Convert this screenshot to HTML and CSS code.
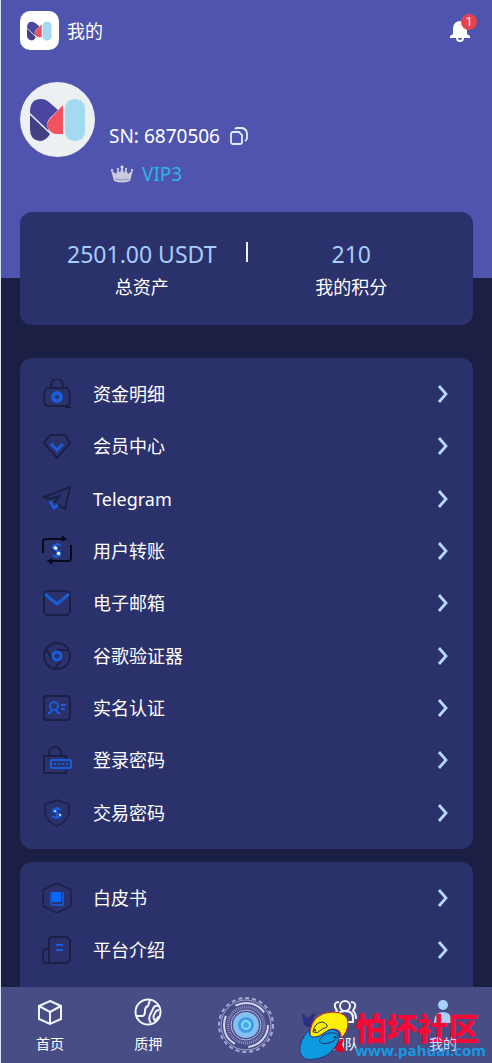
FILE: index.html
```html
<!DOCTYPE html>
<html lang="zh-CN">
<head>
    <meta charset="UTF-8">
    <meta name="viewport" content="width=device-width, initial-scale=1.0">
    <title>我的</title>
    <link rel="stylesheet" href="styles.css">
</head>
<body>
    <!-- Shared shapes -->
    <svg class="defs" aria-hidden="true">
        <symbol id="logo" viewBox="0 0 56 44">
            <path d="M0 17 20 36q-4 7-10 7Q0 42 0 31Z" fill="#423f83"/>
            <path d="M0 14Q0 1 11 1q5 0 9 4l8 7-8 8q-5 5-1 13L0 15Z" fill="#4b469f"/>
            <path d="M33 7v29h-6q-6 0-9-6-2-6 3-10Z" fill="#f0525f"/>
            <rect x="35" y="1" width="20" height="42" rx="9" fill="#a3daf2"/>
        </symbol>
        <symbol id="arrow" viewBox="0 0 10 18">
            <path d="m1 1 7 8-7 8" fill="none" stroke="#b7d8ff" stroke-width="2.8"/>
        </symbol>
    </svg>

    <div class="app">
        <main class="content">
            <header class="header">
                <div class="topbar">
                    <span class="brand"><svg width="25" height="20"><use href="#logo"/></svg></span>
                    <h1>我的</h1>
                    <button class="bell" aria-label="消息">
                        <svg width="20" height="22" viewBox="0 0 20 22">
                            <path d="M10 1a7 7 0 0 0-7 7v6l-3 2v2h20v-2l-3-2V8a7 7 0 0 0-7-7Z" fill="#fff"/>
                            <path d="M7 18a3 3 0 0 0 6 0" fill="none" stroke="#fff" stroke-width="2"/>
                        </svg>
                        <span class="badge">1</span>
                    </button>
                </div>
                <div class="profile">
                    <span class="avatar"><svg width="56" height="44"><use href="#logo"/></svg></span>
                    <div class="profile-info">
                        <div class="sn">
                            <span>SN: 6870506</span>
                            <button aria-label="复制">
                                <svg width="18" height="18" viewBox="0 0 18 18" fill="none" stroke="#e4edff" stroke-width="1.8">
                                    <path d="M3 5h6l3 3v7a2 2 0 0 1-2 2H3a2 2 0 0 1-2-2V7a2 2 0 0 1 2-2Z"/>
                                    <path d="M5 2q1-1 2-1h5q5 1 5 6v4q0 2-2 3"/>
                                </svg>
                            </button>
                        </div>
                        <div class="vip">
                            <svg width="24" height="18" viewBox="0 0 24 18">
                                <path d="m1 5 5 4 2-5 2 4 2-7 2 7 2-4 2 5 5-4-3 11q-8 3-16 0Z" fill="#c9cbe0"/>
                                <path d="M5 14q7 2 14 0" fill="none" stroke="#8f90b8"/>
                                <g fill="#e6e7f2"><circle cx="12" cy="2" r="1.5"/><circle cx="8" cy="4" r="1"/><circle cx="16" cy="4" r="1"/><circle cx="2" cy="5" r="1"/><circle cx="22" cy="5" r="1"/></g>
                            </svg>
                            <span>VIP3</span>
                        </div>
                    </div>
                </div>
            </header>

            <section class="card stats">
                <div class="stat"><strong>2501.00 USDT</strong><span>总资产</span></div>
                <div class="divider"></div>
                <div class="stat"><strong>210</strong><span>我的积分</span></div>
            </section>

            <nav class="card menu menu-main">
                <a href="#">
                    <svg class="icon" viewBox="0 0 30 30">
                        <path d="M9 9V6a6 6 0 0 1 12 0v3M5 9h20q3 3 3 10t-3 8H5q-3-2-3-8T5 9Z"/>
                        <path d="M23 28h6"/>
                        <circle class="blue" cx="15" cy="18" r="4" stroke-width="4"/>
                    </svg>
                    <span>资金明细</span><svg class="arrow"><use href="#arrow"/></svg>
                </a>
                <a href="#">
                    <svg class="icon" viewBox="0 0 30 30">
                        <path d="M8 4h15l5 8-13 15L2 12Z"/>
                        <path class="blue" d="m9 13 6 6 6-6" stroke-width="3"/>
                    </svg>
                    <span>会员中心</span><svg class="arrow"><use href="#arrow"/></svg>
                </a>
                <a href="#">
                    <svg class="icon" viewBox="0 0 30 30">
                        <path d="m8 15-6-2L28 3l-5 22-8-5M8 15l9-3-5 7"/>
                        <path class="blue" d="m8 17 4 7 4-3" stroke-width="3"/>
                    </svg>
                    <span>Telegram</span><svg class="arrow"><use href="#arrow"/></svg>
                </a>
                <a href="#">
                    <svg class="icon" viewBox="0 0 30 30">
                        <path class="black" d="M1 17V6q0-3 3-3h19l-3-3m9 9v13q0 3-3 3H7l3 3M20 5l3-2M7 25l3-2"/>
                        <path class="blue" d="M19 10q-2-3-6-1t-1 4l5 2q3 3 0 5t-6-1"/>
                        <path class="blue" d="M15 6v16" stroke-width="1"/>
                        <path d="m12 11 3 2M15 17l3 1" stroke="#d7f3ff" stroke-width="3"/>
                    </svg>
                    <span>用户转账</span><svg class="arrow"><use href="#arrow"/></svg>
                </a>
                <a href="#">
                    <svg class="icon" viewBox="0 0 30 30">
                        <rect x="2" y="3" width="26" height="24" rx="4"/>
                        <path class="blue" d="m3 6 12 10L27 6" stroke-width="3"/>
                    </svg>
                    <span>电子邮箱</span><svg class="arrow"><use href="#arrow"/></svg>
                </a>
                <a href="#">
                    <svg class="icon" viewBox="0 0 30 30">
                        <circle cx="15" cy="15" r="13"/>
                        <path d="M4 8l6 10M15 9h12M19 19l-6 9"/>
                        <circle class="blue" cx="15" cy="15" r="4" stroke-width="3"/>
                    </svg>
                    <span>谷歌验证器</span><svg class="arrow"><use href="#arrow"/></svg>
                </a>
                <a href="#">
                    <svg class="icon" viewBox="0 0 30 30">
                        <rect x="2" y="3" width="26" height="24" rx="3"/>
                        <circle class="blue" cx="12" cy="13" r="4"/>
                        <path class="blue" d="M6 20q3 0 4-3m4 0q1 3 4 3M6 20h3M15 20h3M19 12h5M19 16h4"/>
                    </svg>
                    <span>实名认证</span><svg class="arrow"><use href="#arrow"/></svg>
                </a>
                <a href="#">
                    <svg class="icon" viewBox="0 0 30 30">
                        <path d="M7 11V8a6 6 0 0 1 12 0v3M24 14v-3H2v17h22v-3"/>
                        <rect class="blue" x="9" y="15" width="20" height="8" rx="1"/>
                        <path class="blue" d="M12 19h14" stroke-dasharray="2 2"/>
                    </svg>
                    <span>登录密码</span><svg class="arrow"><use href="#arrow"/></svg>
                </a>
                <a href="#">
                    <svg class="icon" viewBox="0 0 30 30">
                        <path d="M15 2q6 3 12 4v9q-1 8-12 13Q4 23 3 15V6q6-1 12-4Z" stroke-width="1.5"/>
                        <path class="blue" d="M19 12q-4-3-7-1t0 3 6 2-1 3-7-1M15 9v11"/>
                        <path d="M12 13h2M17 17h2" stroke="#9edcff"/>
                    </svg>
                    <span>交易密码</span><svg class="arrow"><use href="#arrow"/></svg>
                </a>
            </nav>

            <nav class="card menu menu-more">
                <a href="#">
                    <svg class="icon" viewBox="0 0 30 30">
                        <path d="m15 0 14 7v16l-14 7-14-7V7Z" stroke-width="1.5"/>
                        <rect class="book" x="10" y="9" width="9" height="10"/>
                        <path class="blue" d="M9 9v11q0 2 2 2h10V9" stroke-width="1.5"/>
                    </svg>
                    <span>白皮书</span><svg class="arrow"><use href="#arrow"/></svg>
                </a>
                <a href="#">
                    <svg class="icon" viewBox="0 0 30 30">
                        <path d="M7 28V5q0-3 3-3h15l3 3v20l-3 3H4q-3 0-3-3V17l2-3h4"/>
                        <path class="blue" d="M14 10h7M14 15h7"/>
                    </svg>
                    <span>平台介绍</span><svg class="arrow"><use href="#arrow"/></svg>
                </a>
            </nav>
        </main>

        <nav class="tabbar">
            <a href="#">
                <svg width="28" height="28" viewBox="0 0 28 28"><path d="m14 3 11 5v13l-11 5-11-5V8Zm0 23V14M3 8l11 6 11-6"/></svg>
                <span>首页</span>
            </a>
            <a href="#">
                <svg width="28" height="28" viewBox="0 0 28 28">
                    <circle cx="14" cy="14" r="12.5"/>
                    <path d="M2 18h6q3 0 3-5 0-4 3-5l2-6M25 8q-5-1-6 3l-3 6q-2 5 1 8M25 18l-4 5q-3-4 0-8 1-3 4-3"/>
                </svg>
                <span>质押</span>
            </a>
            <a href="#" class="core" aria-label="挖矿">
                <svg width="58" height="58" viewBox="0 0 58 58">
                    <circle cx="29" cy="29" r="27" stroke="#aaa9d6" stroke-width="2" stroke-dasharray="4 3"/>
                    <circle cx="29" cy="29" r="25" stroke="#a5a4d0" stroke-width="1"/>
                    <circle cx="29" cy="29" r="22" stroke="#d5d5f0" stroke-width="2" stroke-dasharray="32 14"/>
                    <circle cx="29" cy="29" r="18" stroke="#8f91c3" stroke-width="3" stroke-dasharray="1 1"/>
                    <circle cx="29" cy="29" r="15" stroke="#b8bde5" stroke-width="1"/>
                    <circle cx="29" cy="29" r="13" fill="#8abdf0" stroke="none"/>
                    <circle cx="29" cy="29" r="9" fill="#4a98e4" stroke="#79c7f8" stroke-width="2"/>
                    <circle cx="29" cy="29" r="4" fill="#43a9ef" stroke="#79e2ff" stroke-width="2"/>
                </svg>
            </a>
            <a href="#">
                <svg width="28" height="28" viewBox="0 0 28 28">
                    <circle cx="14" cy="8" r="5"/>
                    <path d="M6 24v-4q0-7 8-7t8 7v4ZM8 4Q3 4 4 9l2 4q-3 2-3 8M20 4q5 0 4 5l-2 4q3 2 3 8"/>
                </svg>
                <span>团队</span>
            </a>
            <a href="#" class="active">
                <svg width="28" height="28" viewBox="0 0 28 28"><circle cx="14" cy="7" r="5"/><path d="M5 25q0-11 9-11t9 11Z"/></svg>
                <span>我的</span>
            </a>
        </nav>

        <div class="community">
            <svg width="50" height="50" viewBox="0 0 50 50">
                <path d="m3 2 5 5 9-6-3 8-2 8-6-2q-3-5-3-13Z" fill="#293082"/>
                <path d="m36 32 9-5-2 7 3 6-6 1-5-3-4 4q0-7 5-10Z" fill="#e60020"/>
                <path d="M11 20Q14 2 33 1q16 0 16 11 0 9-7 15 1-9-8-9-6 0-10 6-6 5-13 1Z" fill="#fff000" stroke="#c01c3c"/>
                <path d="M11 18q-2 9 5 8 4 0 9-4 7-6 13-2 5 5-1 15-7 11-20 13Q3 51 1 41-1 30 11 18Z" fill="#0b9add" stroke="#302e76"/>
                <path d="M14 21q1-9 9-10 3 0 5 3 1 3-3 3l-3 2q-3 4-8 2ZM20 30q3-7 11-8 7-1 8 3l-4 5-5 2q-7 2-10-2Z" fill="none" stroke="#302e76"/>
                <circle cx="16" cy="19" r="1" fill="#222"/><circle cx="36" cy="26" r="1" fill="#222"/>
            </svg>
            <div class="community-text"><strong>怕坏社区</strong><span>www.pahuai.com</span></div>
        </div>
    </div>
</body>
</html>
```

FILE: styles.css
```css
* {
    box-sizing: border-box;
}
body {
    margin: 0;
    font-family: "Noto Sans", "Noto Sans CJK SC", sans-serif;
    font-size: 18px;
    line-height: 24px;
    color: #fff;
    background: #1a1f43;
}
a {
    color: inherit;
    text-decoration: none;
}
button {
    display: flex;
    padding: 0;
    border: none;
    background: none;
    color: inherit;
    cursor: pointer;
}
.defs {
    position: absolute;
    width: 0;
    height: 0;
}
.app {
    position: relative;
    display: flex;
    flex-direction: column;
    height: 100vh;
    border-left: 1px solid #d5e5f2;
}
.content {
    flex: 1;
    min-height: 0;
    overflow-y: auto;
    scrollbar-width: none;
}

/* Header */
.header {
    height: 278px;
    padding: 11px 19px 0;
    background: #4f54ae;
}
.topbar {
    display: flex;
    align-items: center;
    gap: 8px;
}
.topbar h1 {
    flex: 1;
    margin: 0;
    font-size: 18px;
    font-weight: 400;
}
.brand {
    display: flex;
    align-items: center;
    justify-content: center;
    width: 39px;
    height: 39px;
    border-radius: 10px;
    background: #fff;
}
.bell {
    position: relative;
    margin-right: 3px;
}
.badge {
    position: absolute;
    top: -6px;
    right: -7px;
    width: 16px;
    height: 16px;
    border-radius: 50%;
    background: #e4434d;
    font-family: Roboto, sans-serif;
    font-size: 12px;
    line-height: 16px;
    text-align: center;
}
.profile {
    display: flex;
    gap: 14px;
    margin-top: 32px;
}
.avatar {
    display: flex;
    align-items: center;
    justify-content: center;
    width: 75px;
    height: 75px;
    border-radius: 50%;
    background: #edf0f2;
}
.profile-info {
    padding-top: 42px;
}
.sn,
.vip {
    display: flex;
    align-items: center;
    gap: 10px;
    font-size: 19px;
}
.vip {
    gap: 8px;
    margin-top: 14px;
    padding-left: 1px;
    color: #2cb5e8;
}

/* Cards */
.card {
    margin: 0 19px;
    border-radius: 12px;
    background: #2b316a;
}
.stats {
    position: relative;
    display: grid;
    grid-template-columns: 1fr 2px 1fr;
    margin-top: -66px;
    padding: 26px 18px;
}
.stat {
    display: flex;
    flex-direction: column;
    align-items: center;
    gap: 5px;
}
.stat strong {
    font-size: 23px;
    font-weight: 400;
    line-height: 32px;
    color: #a6cdfd;
}
.divider {
    height: 20px;
    margin-top: 4px;
    background: #eef2ff;
}
.menu {
    display: flex;
    flex-direction: column;
    padding: 10px 24px 10px 22px;
}
.menu-main {
    min-height: 491px;
    margin-top: 33px;
}
.menu-more {
    margin-top: 13px;
    padding-bottom: 40px;
}
.menu a {
    display: flex;
    flex: 1;
    align-items: center;
    gap: 21px;
    min-height: 52px;
}
.menu a span {
    flex: 1;
}
.icon {
    width: 30px;
    height: 30px;
    fill: none;
    stroke: #1b2146;
    stroke-width: 2;
}
.icon .blue {
    stroke: #195dd9;
}
.icon .black {
    stroke: #080b20;
}
.icon .book {
    fill: #0969ff;
    stroke: none;
}
.arrow {
    width: 12px;
    height: 18px;
}

/* Bottom tabs */
.tabbar {
    display: grid;
    grid-template-columns: repeat(5, 1fr);
    height: 76px;
    background: #494d86;
    font-size: 14px;
    line-height: 20px;
}
.tabbar a {
    display: flex;
    flex-direction: column;
    align-items: center;
    gap: 8px;
    padding-top: 11px;
}
.tabbar svg {
    fill: none;
    stroke: #f1f5ff;
    stroke-width: 2;
}
.tabbar .core {
    padding-top: 9px;
}
.tabbar .active svg {
    fill: #a9d0ff;
    stroke: none;
}
.tabbar .active span {
    position: relative;
    z-index: 1;
    color: #c5dcff;
}

/* Community mark, lies over the tabs */
.community {
    position: absolute;
    right: 6px;
    bottom: 2px;
    display: flex;
    gap: 6px;
    pointer-events: none;
}
.community-text {
    display: flex;
    flex-direction: column;
}
.community strong {
    font-family: "Noto Sans CJK SC", sans-serif;
    font-size: 31px;
    font-weight: 900;
    line-height: 32px;
    color: #f50a37;
}
.community span {
    font-family: "Open Sans", sans-serif;
    font-size: 15px;
    font-weight: 700;
    line-height: 14px;
    color: #159be0;
}
```
